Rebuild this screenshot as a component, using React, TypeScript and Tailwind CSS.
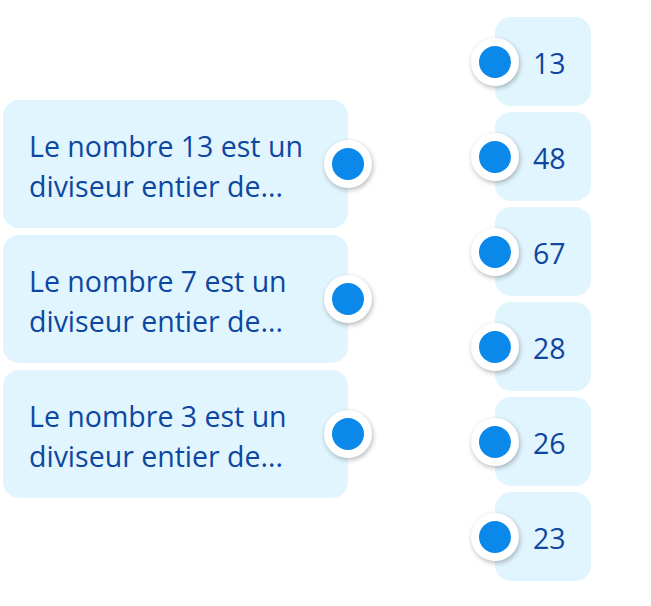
const statements = [
  'Le nombre 13 est un diviseur entier de...',
  'Le nombre 7 est un diviseur entier de...',
  'Le nombre 3 est un diviseur entier de...',
];

const numbers = ['13', '48', '67', '28', '26', '23'];

function Dot({ side }: { side: 'left' | 'right' }) {
  return (
    <span
      className={`absolute top-1/2 -translate-y-1/2 w-12 h-12 rounded-full bg-[#0a89ea] border-[8px] border-white shadow-[1px_2px_5px_rgba(0,0,0,0.28)] ${
        side === 'right' ? 'right-[-24px]' : 'left-[-24px]'
      }`}
    />
  );
}

export default function App() {
  return (
    <div
      className="flex items-start bg-white w-[651px] h-[606px]"
      style={{ fontFamily: '"Open Sans", "Noto Sans", sans-serif' }}
    >
      {/* statements */}
      <div className="flex flex-col gap-[7px] ml-[3px] mt-[100px] w-[345px]">
        {statements.map((text) => (
          <div
            key={text}
            className="relative flex items-center h-[128px] pt-[3px] pl-[26px] pr-[30px] rounded-2xl bg-[#e1f5fe]"
          >
            <p className="text-[28.5px] leading-[40px] text-[#0d47a1]">{text}</p>
            <Dot side="right" />
          </div>
        ))}
      </div>

      {/* answers */}
      <div className="flex flex-col gap-[6px] ml-[147px] mt-[17px] w-[96px]">
        {numbers.map((n) => (
          <div
            key={n}
            className="relative flex items-center h-[89px] pt-[3px] pl-[38px] rounded-2xl bg-[#e1f5fe]"
          >
            <span className="text-[28.5px] leading-none text-[#0d47a1]">{n}</span>
            <Dot side="left" />
          </div>
        ))}
      </div>
    </div>
  );
}
